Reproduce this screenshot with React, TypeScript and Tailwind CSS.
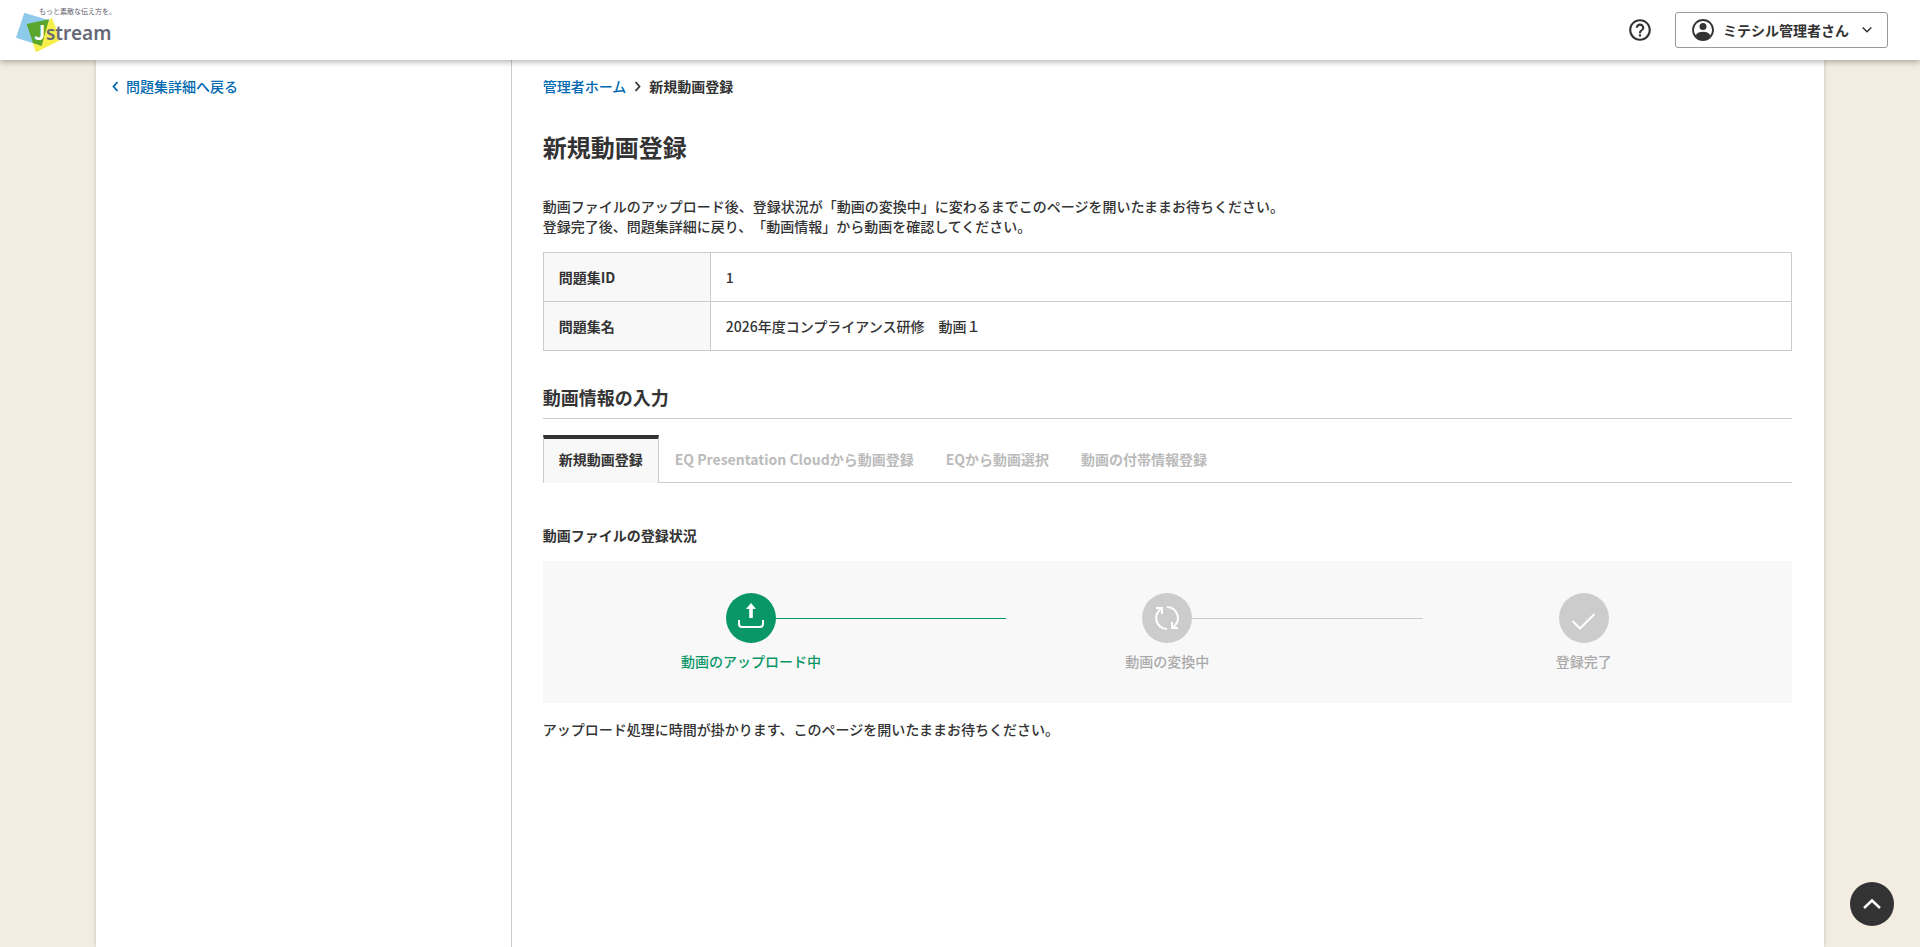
import { MdHelpOutline } from "react-icons/md";

const tabs = [
  "新規動画登録",
  "EQ Presentation Cloudから動画登録",
  "EQから動画選択",
  "動画の付帯情報登録",
];

const UserIcon = () => (
  <svg width="22" height="22" viewBox="0 0 22 22" className="mr-[9px]">
    <circle cx="11" cy="11" r="10" fill="none" stroke="currentColor" strokeWidth="1.8" />
    <circle cx="11" cy="7.600" r="3.500" fill="currentColor" />
    <path d="M3.500 16.500C5 13.600 8 12.800 11 12.800s6 .8 7.500 3.700A9.800 9.800 0 0 1 11 21a9.800 9.800 0 0 1-7.500-4.500z" fill="currentColor" />
  </svg>
);

const UploadIcon = () => (
  <svg width="50" height="50" viewBox="0 0 50 50" fill="none">
    <path d="M25 10l5 6h-3.2v9h-3.6v-9H20z" fill="#fff" />
    <path d="M13 27v4a3 3 0 0 0 3 3h18a3 3 0 0 0 3-3v-4" stroke="#fff" strokeWidth="2" />
  </svg>
);

const ConvertIcon = () => (
  <svg width="50" height="50" viewBox="0 0 50 50" fill="none" stroke="#fff" strokeWidth="2">
    <path d="M25 14a11 11 0 0 1 5.5 20.5" />
    <path d="M25 36a11 11 0 0 1-5.5-20.5" />
    <path d="M14 15h6v6" />
    <path d="M36 35h-6v-6" />
  </svg>
);

const CheckIcon = () => (
  <svg width="50" height="50" viewBox="0 0 50 50" fill="none" stroke="#fff" strokeWidth="2">
    <path d="M13.5 28l7.5 7.5L35.5 21" />
  </svg>
);

const steps = [
  { label: "動画のアップロード中", icon: <UploadIcon />, active: true },
  { label: "動画の変換中", icon: <ConvertIcon />, active: false },
  { label: "登録完了", icon: <CheckIcon />, active: false },
];

const Logo = () => (
  <svg width="106" height="60" viewBox="12 0 106 60" role="img" aria-label="Jstream">
    <path d="M24.300 12.700L50 20.500 41.700 46 16 37.700z" fill="#8ecbea" />
    <path d="M51.700 17.300L60.700 40 36 52.300 32.700 43z" fill="#f5ee4b" />
    <path d="M26.700 24L49 19.300 41.700 46 33 43z" fill="#5aa62c" />
    <text x="39" y="14" fontSize="7" fill="#5f626d" fontFamily="Noto Sans CJK JP">もっと素敵な伝え方を。</text>
    <text x="34" y="40" fontSize="20" fontWeight="700" fill="#fff" fontFamily="Noto Sans CJK JP">J</text>
    <text x="46" y="40" fontSize="19" fontWeight="600" fill="#666876" fontFamily="Noto Sans">stream</text>
  </svg>
);

const Header = () => (
  <header className="sticky top-0 z-10 flex h-15 items-center justify-between bg-white pl-3 pr-8 shadow-[0_2px_6px_rgba(0,0,0,0.3)]">
    <a href="#">
      <Logo />
    </a>
    <div className="flex items-center gap-[22px]">
      <button type="button" aria-label="ヘルプ">
        <MdHelpOutline size={26} />
      </button>
      <button
        type="button"
        className="flex h-9 items-center rounded-[3px] border border-[#999] pr-3 pl-4 font-bold"
      >
        <UserIcon />
        ミテシル管理者さん
        <svg width="16" height="16" viewBox="0 0 16 16" fill="none" stroke="currentColor" strokeWidth="1.5" className="ml-[10px]">
          <path d="M3.700 5.500L8 9.800l4.300-4.300" />
        </svg>
      </button>
    </div>
  </header>
);

const Progress = () => (
  <ol className="mt-4 grid grid-cols-3 bg-[#f8f8f8] py-8">
    {steps.map((step, i) => (
      <li key={step.label} className="relative flex flex-col items-center">
        {i < steps.length - 1 && (
          <span
            className={`absolute left-1/2 top-[25px] h-px w-[calc(50%+47px)] ${step.active ? "bg-[#0a9768]" : "bg-[#ccc]"}`}
          />
        )}
        <span
          className={`relative size-[50px] rounded-full ${step.active ? "bg-[#0a9768]" : "bg-[#ccc]"}`}
        >
          {step.icon}
        </span>
        <span
          className={`mt-2 font-medium ${step.active ? "text-[#0a9768]" : "text-[#aaa]"}`}
        >
          {step.label}
        </span>
      </li>
    ))}
  </ol>
);

const App = () => {
  return (
    <div className="flex min-h-screen flex-col bg-[#f3ece0] font-['Noto_Sans_CJK_JP',sans-serif] text-sm text-[#333] [text-spacing-trim:space-all]">
      <Header />
      <div className="mx-auto flex w-[90%] flex-1 bg-white shadow-[0_0_4px_rgba(0,0,0,0.2)]">
        <aside className="w-[24%] px-4 pt-4">
          <a href="#" className="flex items-center font-medium text-[#0069b0]">
            <svg width="7" height="11" viewBox="0 0 7 11" fill="none" stroke="currentColor" strokeWidth="1.8" className="mr-[7px]">
              <path d="M5.500 1L1.500 5.500l4 4.500" />
            </svg>
            問題集詳細へ戻る
          </a>
        </aside>
        <main className="flex-1 border-l border-[#ccc] pt-4 pr-8 pl-[31px]">
          <nav className="flex items-center font-medium">
            <a href="#" className="text-[#0069b0]">
              管理者ホーム
            </a>
            <svg width="7" height="11" viewBox="0 0 7 11" fill="none" stroke="currentColor" strokeWidth="1.8" className="mx-2">
              <path d="M1.500 1l4 4.500-4 4.500" />
            </svg>
            <span className="font-bold">新規動画登録</span>
          </nav>

          <h1 className="mt-[35px] text-2xl font-bold">新規動画登録</h1>

          <p className="mt-[33px] font-medium">
            動画ファイルのアップロード後、登録状況が「動画の変換中」に変わるまでこのページを開いたままお待ちください。
            <br />
            登録完了後、問題集詳細に戻り、「動画情報」から動画を確認してください。
          </p>

          <table className="mt-4 w-full border-collapse border border-[#ccc] text-left">
            <tbody>
              <tr className="border-b border-[#ccc]">
                <th className="w-[167px] border-r border-[#ccc] bg-[#f8f8f8] px-[15px] py-[14px] font-bold">問題集ID</th>
                <td className="px-[15px] font-medium">1</td>
              </tr>
              <tr>
                <th className="border-r border-[#ccc] bg-[#f8f8f8] px-[15px] py-[14px] font-bold">問題集名</th>
                <td className="px-[15px] font-medium">2026年度コンプライアンス研修　動画１</td>
              </tr>
            </tbody>
          </table>

          <h2 className="mt-8 border-b border-[#ccc] pb-[7px] text-lg font-bold">動画情報の入力</h2>

          <div role="tablist" className="mt-4 flex border-b border-[#ccc]">
            {tabs.map((tab, i) => (
              <button
                key={tab}
                type="button"
                role="tab"
                aria-selected={i === 0}
                className={
                  i === 0
                    ? "-mb-px border-x border-t-4 border-x-[#ccc] border-t-[#333] bg-[#f8f8f8] px-[15px] pt-[10px] pb-[14px] font-bold"
                    : "px-4 pt-[14px] pb-[13px] font-bold text-[#bbb]"
                }
              >
                {tab}
              </button>
            ))}
          </div>

          <h3 className="mt-[42px] font-bold">動画ファイルの登録状況</h3>
          <Progress />
          <p className="mt-4 font-medium">
            アップロード処理に時間が掛かります、このページを開いたままお待ちください。
          </p>
        </main>
      </div>
      <a
        href="#"
        aria-label="ページトップへ"
        className="fixed right-[26px] bottom-[21px] flex size-11 items-center justify-center rounded-full bg-[#333]"
      >
        <svg width="18" height="12" viewBox="0 0 18 12" fill="none" stroke="#fff" strokeWidth="2.4">
          <path d="M1 10l8-7.500 8 7.500" />
        </svg>
      </a>
    </div>
  );
};

export default App;
